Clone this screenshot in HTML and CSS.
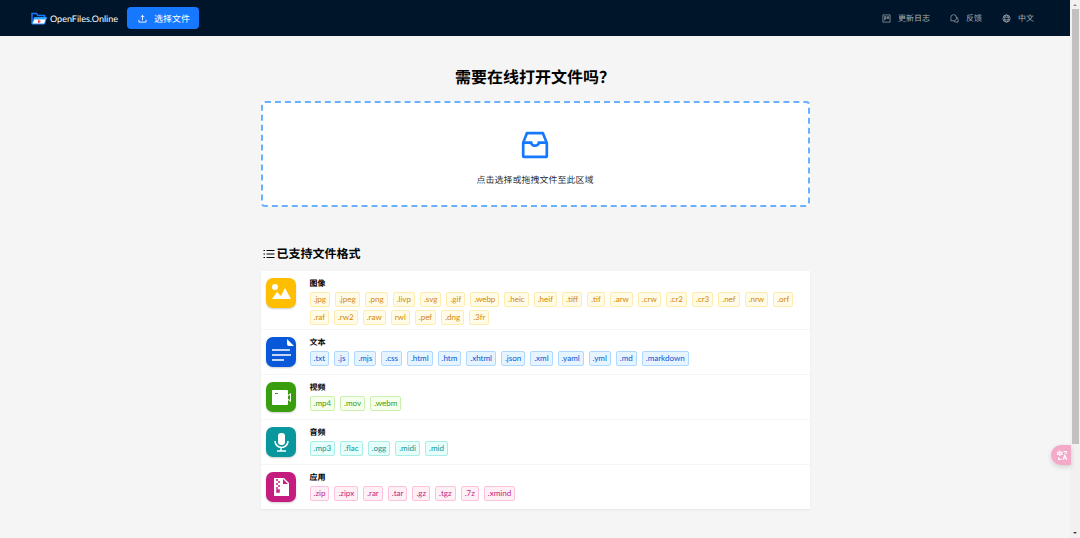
FILE: index.html
```html
<!DOCTYPE html>
<html lang="zh-CN">
<head>
  <meta charset="UTF-8" />
  <meta name="viewport" content="width=device-width, initial-scale=1.0" />
  <title>OpenFiles.Online</title>
  <link rel="stylesheet" href="styles.css">
</head>
<body>

  <div class="page">
    <header>
      <a class="logo" href="#">
        <svg viewBox="0 0 32 26" aria-hidden="true">
          <path d="M2 23V3h9l3 4h13v5" fill="none" stroke="#1677ff" stroke-width="3" />
          <path d="M2 24L7 11h24l-4 13z" fill="#fff" stroke="#1e90ff" stroke-width="2" />
          <path d="M8 11h22l-1 4H6z" fill="#35a5ff" />
          <path d="M14 15l6 4-6 4z" fill="#e64a5c" />
        </svg>
        <span>OpenFiles.Online</span>
      </a>
      <button class="select-btn" type="button">
        <svg viewBox="0 0 20 20" aria-hidden="true"><path d="M10 14V3M6 7l4-4 4 4M2 13v5h16v-5" /></svg>
        <span>选择文件</span>
      </button>
      <nav>
        <a href="#">
          <svg viewBox="0 0 20 20" aria-hidden="true"><path d="M2 2h16v16H2zM6 5v9M6 6h3v5H6M12 6h3v4h-3z" /></svg>
          <span>更新日志</span>
        </a>
        <a href="#">
          <svg viewBox="0 0 20 20" aria-hidden="true"><path d="M5 15H2V8a6 6 0 0 1 12-1 6 6 0 0 1-7 8zM14 7a5 5 0 0 1 4 5v6h-5a6 6 0 0 1-5-3" /></svg>
          <span>反馈</span>
        </a>
        <a href="#">
          <svg viewBox="0 0 20 20" aria-hidden="true"><circle cx="10" cy="10" r="8" /><ellipse cx="10" cy="10" rx="4" ry="8" /><path d="M3 7h14M3 13h14" /></svg>
          <span>中文</span>
        </a>
      </nav>
    </header>

    <main>
      <h1>需要在线打开文件吗？</h1>
      <button class="dropzone" type="button">
        <svg viewBox="0 0 1024 1024" aria-hidden="true"><path d="M885.2 446.3l-.2-.8-112.2-285.1c-5-16.1-19.9-27.2-36.8-27.2H281.2c-17 0-32.1 11.3-36.9 27.6L139.4 443l-.3.7-.2.8c-1.3 4.9-1.7 9.9-1 14.8-.1 1.6-.2 3.2-.2 4.8V830a60.9 60.9 0 0060.8 60.8h627.2c33.5 0 60.8-27.3 60.9-60.8V464.1c0-1.3 0-2.6-.1-3.7.4-4.9 0-9.6-1.3-14.1zm-295.8-43l-.3 15.7c-.8 44.9-31.8 75.1-77.1 75.1-22.1 0-41.1-7.1-54.8-20.6S436 441.2 435.6 419l-.3-15.7H229.5L309 210h399.2l81.7 193.3H589.4zm-375 76.8h157.3c24.3 57.1 76 90.8 140.4 90.8 33.7 0 65-9.4 90.3-27.2 22.2-15.6 39.5-37.4 50.7-63.6h156.5V814H214.4V480.1z" /></svg>
        <span>点击选择或拖拽文件至此区域</span>
      </button>

      <h2>
        <svg viewBox="0 0 24 20" aria-hidden="true"><path d="M7 3h16M7 10h16M7 17h16M1 3h3M1 10h3M1 17h3" /></svg>
        <span>已支持文件格式</span>
      </h2>

      <div class="formats">
        <section class="format gold">
          <svg class="format-icon" viewBox="0 0 30 30" aria-hidden="true">
            <circle cx="9" cy="9" r="3" />
            <path d="M6 21l5-7 4 4 4-8 6 11z" />
          </svg>
          <div class="format-body">
            <h3>图像</h3>
            <div class="tags">
              <span>.jpg</span><span>.jpeg</span><span>.png</span><span>.livp</span><span>.svg</span><span>.gif</span><span>.webp</span><span>.heic</span><span>.heif</span><span>.tiff</span><span>.tif</span><span>.arw</span><span>.crw</span><span>.cr2</span><span>.cr3</span><span>.nef</span><span>.nrw</span><span>.orf</span><span>.raf</span><span>.rw2</span><span>.raw</span><span>rwl</span><span>.pef</span><span>.dng</span><span>.3fr</span>
            </div>
          </div>
        </section>
        <section class="format blue">
          <svg class="format-icon" viewBox="0 0 30 30" aria-hidden="true">
            <path d="M21 2l7 7h-5q-2 0-2-2z" />
            <path class="line" d="M6 13h18M6 18h19M6 23h12" />
          </svg>
          <div class="format-body">
            <h3>文本</h3>
            <div class="tags">
              <span>.txt</span><span>.js</span><span>.mjs</span><span>.css</span><span>.html</span><span>.htm</span><span>.xhtml</span><span>.json</span><span>.xml</span><span>.yaml</span><span>.yml</span><span>.md</span><span>.markdown</span>
            </div>
          </div>
        </section>
        <section class="format green">
          <svg class="format-icon" viewBox="0 0 30 30" aria-hidden="true">
            <path fill-rule="evenodd" d="M7 8h14q1 0 1 1v4l3-2v9l-3-2v4q0 1-1 1H7q-1 0-1-1V9q0-1 1-1zM9 11v1h3v-1zM22 14v3l2 1v-5z" />
          </svg>
          <div class="format-body">
            <h3>视频</h3>
            <div class="tags">
              <span>.mp4</span><span>.mov</span><span>.webm</span>
            </div>
          </div>
        </section>
        <section class="format cyan">
          <svg class="format-icon" viewBox="0 0 30 30" aria-hidden="true">
            <rect x="12" y="6" width="7" height="12" rx="3" />
            <path class="line" d="M9 14a6 6 0 0 0 13 0M15 20v4M11 24h9" />
          </svg>
          <div class="format-body">
            <h3>音频</h3>
            <div class="tags">
              <span>.mp3</span><span>.flac</span><span>.ogg</span><span>.midi</span><span>.mid</span>
            </div>
          </div>
        </section>
        <section class="format magenta">
          <svg class="format-icon" viewBox="0 0 30 30" aria-hidden="true">
            <path fill-rule="evenodd" d="M8 6h10l5 5v13H8zM17 7v5h5z" />
            <path class="zip" d="M11 7v2M13 9v2M11 11v2M13 13v2M11 15v2M11 18h2v2h-2z" />
          </svg>
          <div class="format-body">
            <h3>应用</h3>
            <div class="tags">
              <span>.zip</span><span>.zipx</span><span>.rar</span><span>.tar</span><span>.gz</span><span>.tgz</span><span>.7z</span><span>.xmind</span>
            </div>
          </div>
        </section>
      </div>
    </main>
  </div>

  <div class="scrollbar" aria-hidden="true">
    <span class="arrow up"></span>
    <span class="thumb"></span>
    <span class="arrow down"></span>
  </div>

  <button class="translate" type="button" aria-label="翻译">
    <svg viewBox="0 0 20 20" aria-hidden="true"><path d="M1 4h8v4H1zM5 1v10M12 3h5v4M3 13v4h5M11 18l3-9 4 9M12 15h5" /></svg>
  </button>

</body>
</html>
```

FILE: styles.css
```css
* {
  box-sizing: border-box;
}

body {
  margin: 0;
  min-height: 100vh;
  display: flex;
  font-family: Lato, "Noto Sans CJK SC", sans-serif;
  font-size: 9px;
  color: #000;
  background-color: #f5f5f5;
  text-rendering: geometricPrecision;
}

button {
  font-family: inherit;
  text-rendering: inherit;
  cursor: pointer;
}

a {
  text-decoration: none;
}

.page {
  flex: 1;
  min-width: 0;
}

header {
  height: 36px;
  padding: 0 36px 0 31px;
  display: flex;
  align-items: center;
  background-color: #001529;
}

.logo {
  display: flex;
  align-items: center;
  gap: 3px;
  color: white;
}

.logo svg {
  width: 16px;
  height: 13px;
}

.select-btn {
  height: 22px;
  margin-left: 9px;
  padding: 0 9px 0 11px;
  display: flex;
  align-items: center;
  gap: 7px;
  font-size: 9px;
  color: white;
  background-color: #1677ff;
  border: none;
  border-radius: 4px;
}

.select-btn svg,
nav svg {
  width: 9px;
  height: 9px;
  fill: none;
  stroke: currentColor;
  stroke-width: 2;
}

nav {
  margin-left: auto;
  display: flex;
  gap: 20px;
}

nav svg {
  stroke-width: 1.5;
}

nav a {
  display: flex;
  align-items: center;
  gap: 7px;
  font-size: 8px;
  color: rgba(255, 255, 255, 0.65);
}

main {
  max-width: 549px;
  margin: 0 auto;
}

h1 {
  margin: 30px 0 11px;
  font-size: 16px;
  line-height: 24px;
  text-align: center;
}

.dropzone {
  width: 100%;
  padding: 24px 0 17px;
  display: flex;
  flex-direction: column;
  align-items: center;
  gap: 9px;
  font-size: 9px;
  line-height: 16px;
  color: rgba(0, 0, 0, 0.88);
  background-color: white;
  border: 2px dashed #69b1ff;
  border-radius: 4px;
}

.dropzone svg {
  width: 36px;
  height: 36px;
  fill: #1677ff;
}

h2 {
  margin: 37px 0 7px;
  padding-left: 2px;
  display: flex;
  align-items: center;
  gap: 2px;
  font-size: 12px;
  line-height: 20px;
}

h2 svg {
  width: 12px;
  height: 10px;
  fill: none;
  stroke: #000;
  stroke-width: 2;
}

.formats {
  background-color: white;
  box-shadow: 0 1px 2px rgba(0, 0, 0, 0.06);
}

.format {
  padding: 7px 5px 4px;
  display: flex;
  gap: 14px;
  border-bottom: 1px solid #f5f5f5;
}

.format:last-child {
  border-bottom: none;
}

.format-icon {
  width: 30px;
  height: 30px;
  margin-bottom: 3px;
  flex-shrink: 0;
  fill: white;
  border-radius: 7px;
  box-shadow: 0 1px 2px rgba(0, 0, 0, 0.2);
}

.format-icon .line {
  fill: none;
  stroke: white;
  stroke-width: 1.5;
}

.format-icon .zip {
  fill: none;
  stroke: #c41d7f;
  stroke-width: 1.5;
}

h3 {
  margin: 0;
  font-size: 8px;
  line-height: 10px;
  padding-bottom: 4px;
}

.tags {
  display: flex;
  flex-wrap: wrap;
  gap: 3px 5px;
}

.tags span {
  padding: 0 3px;
  font-size: 8px;
  line-height: 13px;
  border: 1px solid;
  border-radius: 2px;
}

.gold .format-icon { background-color: #ffbf00; }
.blue .format-icon { background-color: #0958d9; }
.green .format-icon { background-color: #389e0d; }
.cyan .format-icon { background-color: #08979c; }
.magenta .format-icon { background-color: #c41d7f; }

.gold .tags span {
  color: #d48806;
  background-color: #fffbe6;
  border-color: #ffedb0;
}

.blue .tags span {
  color: #0958d9;
  background-color: #e6f4ff;
  border-color: #b0d9ff;
}

.green .tags span {
  color: #389e0d;
  background-color: #f6ffed;
  border-color: #cbf0ac;
}

.cyan .tags span {
  color: #08979c;
  background-color: #e6fffb;
  border-color: #a9eee6;
}

.magenta .tags span {
  color: #c41d7f;
  background-color: #fff0f6;
  border-color: #ffc2dd;
}

.scrollbar {
  width: 10px;
  height: 100vh;
  padding: 4px 1px;
  display: flex;
  flex-direction: column;
  align-items: center;
  background-color: #f1f1f1;
}

.thumb {
  width: 7px;
  height: 82%;
  margin-top: 3px;
  background-color: #c1c1c1;
}

.arrow {
  border: 2px solid transparent;
}

.up {
  border-top: none;
  border-bottom: 2px solid #8a8a8a;
}

.down {
  margin-top: auto;
  border-bottom: none;
  border-top: 2px solid #404040;
}

/* floating translate handle */
.translate {
  position: fixed;
  right: 9px;
  bottom: 73px;
  width: 20px;
  height: 20px;
  padding: 0 3px 0 6px;
  display: flex;
  align-items: center;
  background-color: #f5a9c9;
  border: none;
  border-radius: 10px 0 0 10px;
  box-shadow: 0 2px 5px rgba(0, 0, 0, 0.15);
}

.translate svg {
  width: 11px;
  height: 11px;
  fill: none;
  stroke: white;
  stroke-width: 2;
}
```
